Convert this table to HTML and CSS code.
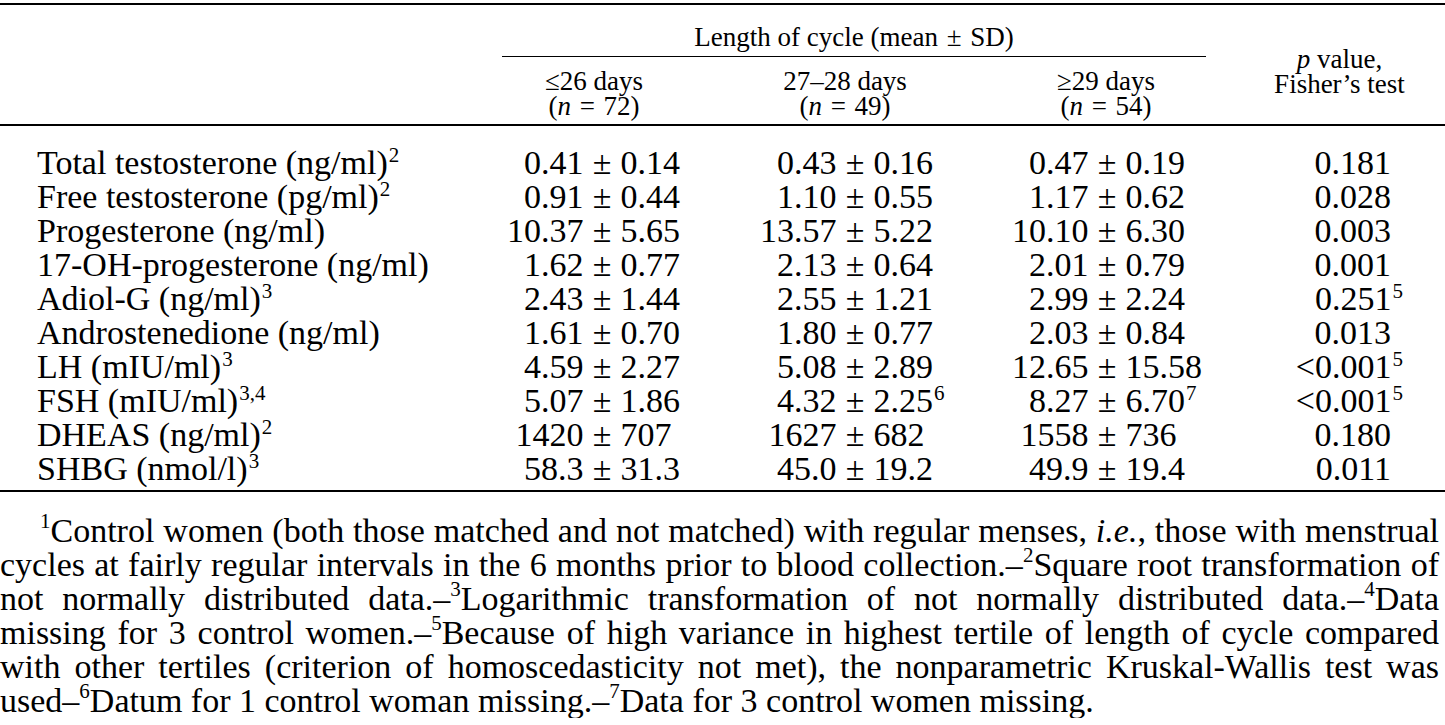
FILE: index.html
```html
<!DOCTYPE html>
<html lang="en">
<head>
<meta charset="utf-8">
<title>Hormone levels by length of cycle</title>
<link rel="stylesheet" href="styles.css">
</head>
<body>
<div class="page">
  <div class="table">
    <div class="thead">
      <div class="th-blank"></div>
      <div class="th-group">Length of cycle (mean <span class="op">±</span> SD)</div>
      <div class="th-p"><i>p</i> value,<br>Fisher’s test</div>
      <div class="th-col g1">≤26 days<br>(<i>n</i> <span class="op">=</span> 72)</div>
      <div class="th-col g2">27–28 days<br>(<i>n</i> <span class="op">=</span> 49)</div>
      <div class="th-col g3">≥29 days<br>(<i>n</i> <span class="op">=</span> 54)</div>
    </div>
    <div class="tbody">
      <div class="row">
        <div class="label">Total testosterone (ng/ml)<sup>2</sup></div>
        <div class="mean">0.41</div><div class="pm">±</div><div class="sd">0.14</div>
        <div class="mean">0.43</div><div class="pm">±</div><div class="sd">0.16</div>
        <div class="mean">0.47</div><div class="pm">±</div><div class="sd">0.19</div>
        <div class="pv">0.181</div>
      </div>
      <div class="row">
        <div class="label">Free testosterone (pg/ml)<sup>2</sup></div>
        <div class="mean">0.91</div><div class="pm">±</div><div class="sd">0.44</div>
        <div class="mean">1.10</div><div class="pm">±</div><div class="sd">0.55</div>
        <div class="mean">1.17</div><div class="pm">±</div><div class="sd">0.62</div>
        <div class="pv">0.028</div>
      </div>
      <div class="row">
        <div class="label">Progesterone (ng/ml)</div>
        <div class="mean">10.37</div><div class="pm">±</div><div class="sd">5.65</div>
        <div class="mean">13.57</div><div class="pm">±</div><div class="sd">5.22</div>
        <div class="mean">10.10</div><div class="pm">±</div><div class="sd">6.30</div>
        <div class="pv">0.003</div>
      </div>
      <div class="row">
        <div class="label">17-OH-progesterone (ng/ml)</div>
        <div class="mean">1.62</div><div class="pm">±</div><div class="sd">0.77</div>
        <div class="mean">2.13</div><div class="pm">±</div><div class="sd">0.64</div>
        <div class="mean">2.01</div><div class="pm">±</div><div class="sd">0.79</div>
        <div class="pv">0.001</div>
      </div>
      <div class="row">
        <div class="label">Adiol-G (ng/ml)<sup>3</sup></div>
        <div class="mean">2.43</div><div class="pm">±</div><div class="sd">1.44</div>
        <div class="mean">2.55</div><div class="pm">±</div><div class="sd">1.21</div>
        <div class="mean">2.99</div><div class="pm">±</div><div class="sd">2.24</div>
        <div class="pv">0.251<sup>5</sup></div>
      </div>
      <div class="row">
        <div class="label">Androstenedione (ng/ml)</div>
        <div class="mean">1.61</div><div class="pm">±</div><div class="sd">0.70</div>
        <div class="mean">1.80</div><div class="pm">±</div><div class="sd">0.77</div>
        <div class="mean">2.03</div><div class="pm">±</div><div class="sd">0.84</div>
        <div class="pv">0.013</div>
      </div>
      <div class="row">
        <div class="label">LH (mIU/ml)<sup>3</sup></div>
        <div class="mean">4.59</div><div class="pm">±</div><div class="sd">2.27</div>
        <div class="mean">5.08</div><div class="pm">±</div><div class="sd">2.89</div>
        <div class="mean">12.65</div><div class="pm">±</div><div class="sd">15.58</div>
        <div class="pv">&lt;0.001<sup>5</sup></div>
      </div>
      <div class="row">
        <div class="label">FSH (mIU/ml)<sup>3,4</sup></div>
        <div class="mean">5.07</div><div class="pm">±</div><div class="sd">1.86</div>
        <div class="mean">4.32</div><div class="pm">±</div><div class="sd">2.25<sup>6</sup></div>
        <div class="mean">8.27</div><div class="pm">±</div><div class="sd">6.70<sup>7</sup></div>
        <div class="pv">&lt;0.001<sup>5</sup></div>
      </div>
      <div class="row">
        <div class="label">DHEAS (ng/ml)<sup>2</sup></div>
        <div class="mean">1420</div><div class="pm">±</div><div class="sd">707</div>
        <div class="mean">1627</div><div class="pm">±</div><div class="sd">682</div>
        <div class="mean">1558</div><div class="pm">±</div><div class="sd">736</div>
        <div class="pv">0.180</div>
      </div>
      <div class="row">
        <div class="label">SHBG (nmol/l)<sup>3</sup></div>
        <div class="mean">58.3</div><div class="pm">±</div><div class="sd">31.3</div>
        <div class="mean">45.0</div><div class="pm">±</div><div class="sd">19.2</div>
        <div class="mean">49.9</div><div class="pm">±</div><div class="sd">19.4</div>
        <div class="pv">0.011</div>
      </div>
    </div>
  </div>
  <div class="notes">
    <span class="line first"><sup>1</sup>Control women (both those matched and not matched) with regular menses, <i>i.e.</i>, those with menstrual</span>
    <span class="line">cycles at fairly regular intervals in the 6 months prior to blood collection.–<sup>2</sup>Square root transformation of</span>
    <span class="line">not normally distributed data.–<sup>3</sup>Logarithmic transformation of not normally distributed data.–<sup>4</sup>Data</span>
    <span class="line">missing for 3 control women.–<sup>5</sup>Because of high variance in highest tertile of length of cycle compared</span>
    <span class="line">with other tertiles (criterion of homoscedasticity not met), the nonparametric Kruskal-Wallis test was</span>
    <span class="line last">used–<sup>6</sup>Datum for 1 control woman missing.–<sup>7</sup>Data for 3 control women missing.</span>
  </div>
</div>
</body>
</html>
```
FILE: styles.css
```css
:root {
  --cols: 502px 90px 20px 74px 159px 20px 139px 93px 20px 91px 1fr;
}

html, body {
  margin: 0;
  padding: 0;
  background: #fff;
}

body {
  font-family: "Liberation Serif", "Times New Roman", serif;
  color: #000;
  width: 1445px;
}

.page {
  padding-top: 3px;
}

.table {
  border-top: 2px solid #000;
  border-bottom: 2px solid #000;
}

/* ---------- header ---------- */
.thead {
  display: grid;
  grid-template-columns: var(--cols);
  font-size: 27px;
  border-bottom: 2px solid #000;
}

.th-blank {
  grid-column: 1;
  grid-row: 1 / 3;
}

.th-group {
  grid-column: 2 / 11;
  grid-row: 1;
  text-align: center;
  line-height: 27px;
  padding: 19px 0 5px 0;
  border-bottom: 1px solid #000;
  margin-right: 2px;
}

.th-p {
  grid-column: 11;
  grid-row: 1 / 3;
  text-align: center;
  line-height: 25px;
  padding: 42px 0 0 26px;
}

.th-col {
  grid-row: 2;
  text-align: center;
  line-height: 25px;
  padding: 12px 0 5px 0;
}

.th-col.g1 { grid-column: 2 / 5; }
.th-col.g2 { grid-column: 5 / 8; }
.th-col.g3 { grid-column: 8 / 11; }

.op {
  margin: 0 2px;
}

/* ---------- body ---------- */
.tbody {
  padding: 20px 0 4px 0;
  font-size: 34px;
  line-height: 34px;
}

.row {
  display: grid;
  grid-template-columns: var(--cols);
  white-space: nowrap;
}

.label {
  padding-left: 37px;
}

.mean {
  text-align: right;
  padding-right: 0.25em;
}

.pm {
  text-align: center;
}

.sd {
  padding-left: 0.25em;
}

.pv {
  text-align: right;
  padding-right: 54px;
}

sup {
  font-size: 21px;
  line-height: 0;
  vertical-align: 12px;
  margin-left: 1px;
}

.pv sup {
  margin-right: -12px;
}

/* ---------- notes ---------- */
.notes {
  margin-top: 22px;
  padding-right: 6px;
  font-size: 34px;
  line-height: 34px;
}

.line {
  display: block;
  text-align: justify;
  text-align-last: justify;
}

.line.first {
  text-indent: 40px;
}

.line.last {
  text-align-last: left;
}

.notes sup {
  font-size: 21px;
  vertical-align: 14px;
  margin-left: 0;
}
```
